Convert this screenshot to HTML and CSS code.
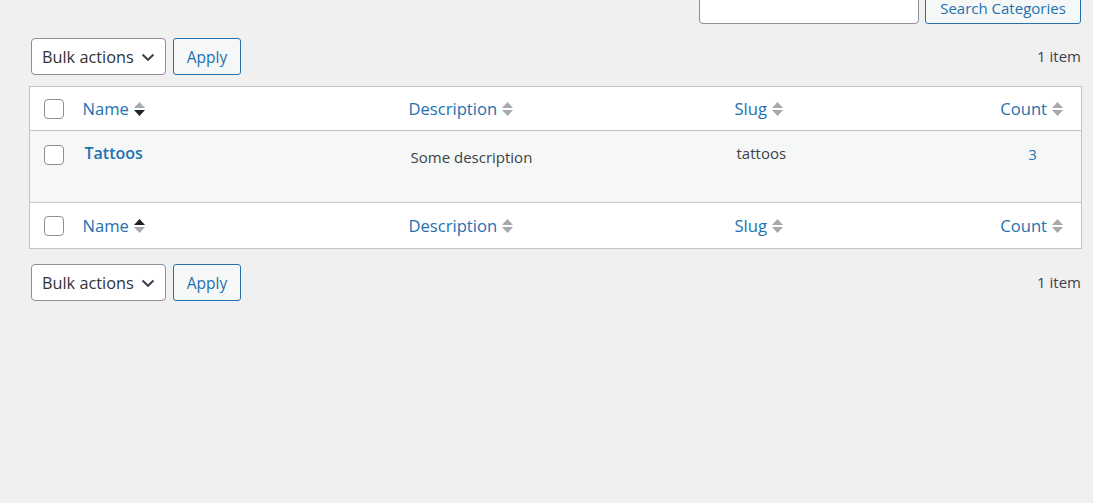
FILE: index.html
```html
<!DOCTYPE html>
<html>
<head>
<meta charset="utf-8">
<link rel="stylesheet" href="styles.css">
</head>
<body>
<div class="wrap">
  <div class="search-box">
    <input class="search-input" type="search">
    <button class="btn search-btn">Search Categories</button>
  </div>

  <div class="tablenav top">
    <div class="bulk">
      <div class="select">Bulk actions
        <svg class="chev" width="16" height="16" viewBox="0 0 16 16"><path d="M2.5 5.5 L8 10.8 L13.5 5.5" fill="none" stroke="#3c434a" stroke-width="2"/></svg>
      </div>
      <button class="btn apply">Apply</button>
    </div>
    <div class="count-items">1 item</div>
  </div>

  <table class="list">
    <colgroup>
      <col class="c-cb"><col class="c-name"><col class="c-desc"><col class="c-slug"><col class="c-count">
    </colgroup>
    <thead>
      <tr>
        <th class="cb"><span class="checkbox"></span></th>
        <th><a class="sort">Name <svg class="arrows" width="11" height="16" viewBox="0 0 11 16"><path d="M5.5 1 L11 7 L0 7Z" fill="#a7aaad"/><path d="M0 9 L11 9 L5.5 15Z" fill="#1d2327"/></svg></a></th>
        <th><a class="sort">Description <svg class="arrows" width="11" height="16" viewBox="0 0 11 16"><path d="M5.5 1 L11 7 L0 7Z" fill="#a7aaad"/><path d="M0 9 L11 9 L5.5 15Z" fill="#a7aaad"/></svg></a></th>
        <th><a class="sort">Slug <svg class="arrows" width="11" height="16" viewBox="0 0 11 16"><path d="M5.5 1 L11 7 L0 7Z" fill="#a7aaad"/><path d="M0 9 L11 9 L5.5 15Z" fill="#a7aaad"/></svg></a></th>
        <th class="num-h"><a class="sort">Count <svg class="arrows" width="11" height="16" viewBox="0 0 11 16"><path d="M5.5 1 L11 7 L0 7Z" fill="#a7aaad"/><path d="M0 9 L11 9 L5.5 15Z" fill="#a7aaad"/></svg></a></th>
      </tr>
    </thead>
    <tbody>
      <tr class="row">
        <td class="cb"><span class="checkbox"></span></td>
        <td><a class="title">Tattoos</a></td>
        <td class="desc">Some description</td>
        <td class="slug">tattoos</td>
        <td class="num"><a class="numlink">3</a></td>
      </tr>
    </tbody>
    <tfoot>
      <tr>
        <th class="cb"><span class="checkbox"></span></th>
        <th><a class="sort">Name <svg class="arrows" width="11" height="16" viewBox="0 0 11 16"><path d="M5.5 1 L11 7 L0 7Z" fill="#1d2327"/><path d="M0 9 L11 9 L5.5 15Z" fill="#a7aaad"/></svg></a></th>
        <th><a class="sort">Description <svg class="arrows" width="11" height="16" viewBox="0 0 11 16"><path d="M5.5 1 L11 7 L0 7Z" fill="#a7aaad"/><path d="M0 9 L11 9 L5.5 15Z" fill="#a7aaad"/></svg></a></th>
        <th><a class="sort">Slug <svg class="arrows" width="11" height="16" viewBox="0 0 11 16"><path d="M5.5 1 L11 7 L0 7Z" fill="#a7aaad"/><path d="M0 9 L11 9 L5.5 15Z" fill="#a7aaad"/></svg></a></th>
        <th class="num-h"><a class="sort">Count <svg class="arrows" width="11" height="16" viewBox="0 0 11 16"><path d="M5.5 1 L11 7 L0 7Z" fill="#a7aaad"/><path d="M0 9 L11 9 L5.5 15Z" fill="#a7aaad"/></svg></a></th>
      </tr>
    </tfoot>
  </table>

  <div class="tablenav bottom">
    <div class="bulk">
      <div class="select">Bulk actions
        <svg class="chev" width="16" height="16" viewBox="0 0 16 16"><path d="M2.5 5.5 L8 10.8 L13.5 5.5" fill="none" stroke="#3c434a" stroke-width="2"/></svg>
      </div>
      <button class="btn apply">Apply</button>
    </div>
    <div class="count-items">1 item</div>
  </div>
</div>
</body>
</html>
```

FILE: styles.css
```css
html, body {
  margin: 0;
  padding: 0;
  background: #f0f0f1;
  font-family: "Open Sans", "Noto Sans", sans-serif;
  color: #3c434a;
}
.wrap {
  padding: 0 12px 0 29px;
  width: 1052px;
}
.search-box {
  display: flex;
  justify-content: flex-end;
  gap: 6px;
  margin-top: -11px;
  height: 35px;
}
.search-input {
  width: 220px;
  height: 35px;
  box-sizing: border-box;
  border: 1px solid #8c8f94;
  border-radius: 4px;
  background: #fff;
  margin: 0;
}
.btn {
  font-family: "Open Sans", "Noto Sans", sans-serif;
  background: #f6f7f7;
  border: 1px solid #2271b1;
  color: #2271b1;
  border-radius: 3px;
  box-sizing: border-box;
  margin: 0;
  padding: 0 12px;
  cursor: pointer;
}
.search-btn {
  width: 156px;
  height: 35px;
  font-size: 15px;
  line-height: 16px;
  padding: 10px 0 0;
  display: flex;
  align-items: flex-start;
  justify-content: center;
}
.tablenav {
  display: flex;
  justify-content: space-between;
  align-items: center;
  height: 37px;
}
.tablenav.top { margin-top: 14px; }
.tablenav.bottom { margin-top: 15px; }
.bulk {
  display: flex;
  gap: 7px;
  padding-left: 2px;
}
.select {
  width: 135px;
  height: 37px;
  box-sizing: border-box;
  border: 1px solid #8c8f94;
  border-radius: 4px;
  background: #fff;
  display: flex;
  align-items: center;
  padding-left: 10px;
  font-size: 16.3px;
  color: #2c3338;
  gap: 6px;
}
.chev { margin-top: 1px; }
.apply {
  width: 68px;
  height: 37px;
  font-size: 15.5px;
}
.count-items {
  font-size: 15px;
  color: #3c434a;
  margin-top: -1px;
}
.list {
  margin-top: 11px;
  width: 1052px;
  border-collapse: collapse;
  table-layout: fixed;
  border: 1px solid #c3c4c7;
  background: #fff;
}
.c-cb { width: 43px; }
.c-name { width: 326px; }
.c-desc { width: 326px; }
.c-slug { width: 260px; }
.c-count { width: 97px; }
th {
  text-align: left;
  font-weight: 400;
  height: 45px;
  padding: 0 10px;
  font-size: 16.6px;
}
thead th { height: 43px; }
thead tr { border-bottom: 1px solid #c3c4c7; }
tfoot tr { border-top: 1px solid #c3c4c7; }
th.cb, td.cb {
  padding: 0 0 0 14px;
}
.checkbox {
  display: block;
  width: 20px;
  height: 20px;
  box-sizing: border-box;
  border: 1px solid #8c8f94;
  border-radius: 4px;
  background: #fff;
}
.sort {
  color: #2271b1;
  display: inline-flex;
  align-items: center;
  gap: 5px;
}
.arrows { display: block; margin-top: 1px; }
th.num-h {
  text-align: right;
  padding-right: 18px;
}
.row {
  background: #f6f7f7;
  height: 72px;
}
.row td {
  vertical-align: top;
  padding: 14px 10px 0;
  font-size: 15px;
}
.row td.cb { padding: 14px 0 0 14px; }
.title {
  color: #2271b1;
  font-weight: 600;
  font-size: 16px;
  display: block;
  margin-top: -3px;
  padding-left: 2px;
}
.desc { padding-top: 16px !important; padding-left: 12px !important; }
.slug { padding-left: 12px !important; padding-top: 12px !important; color: #3c434a; }
.num { text-align: center; padding-top: 13px !important; }
.numlink { color: #2271b1; font-size: 14.5px; }
```
